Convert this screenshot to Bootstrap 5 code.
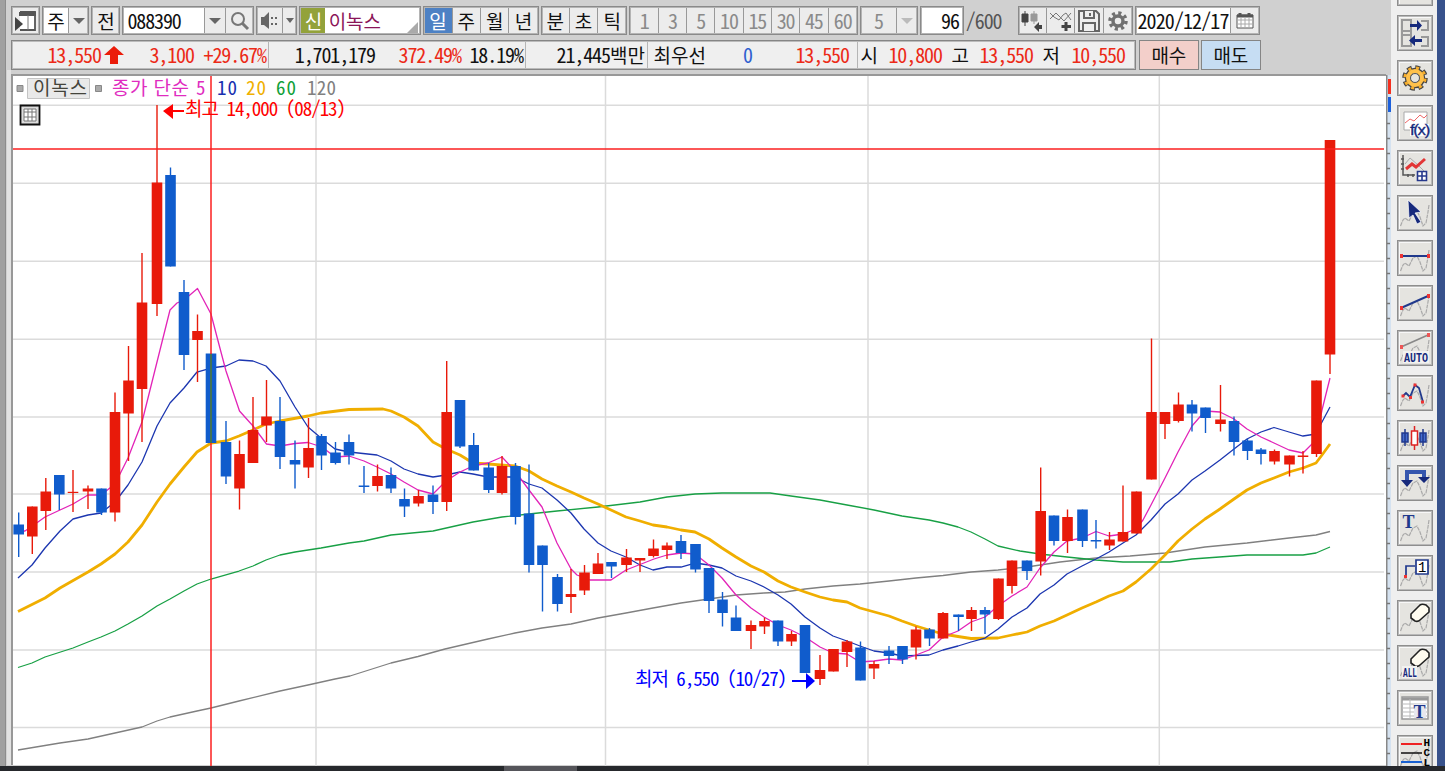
<!DOCTYPE html>
<html lang="ko">
<head>
<meta charset="utf-8">
<title>이녹스 088390</title>
<meta name="viewport" content="width=device-width, initial-scale=1">
<link href="https://cdn.jsdelivr.net/npm/bootstrap@5.3.0/dist/css/bootstrap.min.css" rel="stylesheet">
<style>
  body { height: 771px; background: #d0d0d0; color: #111; font-family: "Noto Sans CJK KR", sans-serif; font-size: 20px; line-height: 26px; letter-spacing: -1.1px; font-feature-settings: "hwid"; white-space: nowrap; }
  svg { display: block; flex: none; }
  .ko { font-size: 19px; letter-spacing: 0; font-feature-settings: normal; }
  .edge-left { width: 7px; background: linear-gradient(90deg, #a0a0a0 5px, #8c8c8c 5px, #8c8c8c 6px, #d0d0d0 6px); }
  .gutter { width: 4px; background: #e2e2e2; }
  .workarea { width: 1379px; }
  .toolbar { height: 40px; padding-top: 6px; }
  .grp { height: 29px; border: 1px solid #8a8a8a; outline: 1px solid #b4b4b4; outline-offset: -2px; background: #ececec; margin-right: 2px; }
  .grp > * { width: 28.3px; height: 27px; display: flex; align-items: center; justify-content: center; flex: none; border-right: 1px solid #999; }
  .grp > :last-child { border-right: 0; }
  .grp .field { background: #fff; }
  .grp.dim { color: #8a8a8a; }
  .grp .sel { background: #4d81c4; color: #fff; }
  .tri { width: 0; height: 0; border: 6px solid transparent; border-top-color: #666; border-bottom: 0; }
  .quote { height: 30px; width: 1125px; border: 1px solid #858585; outline: 1px solid #bbb; outline-offset: -2px; background: #efefef;
    display: grid; grid-template-columns: 89px 23px 70px 75px 106px 86px 65px 122px 58px 46px 97px 9px 20px 64px 27px 64px 27px 65px; justify-items: end; align-items: center; }
  .quote > * { height: 28px; display: flex; align-items: center; }
  .quote .cut { border-right: 1px solid #b5b5b5; padding-right: 2px; }
  .up { color: #ec2a17; }
  .order { height: 30px; border: 1px solid #858585; width: 60px; }
  .buy { background: #f3cfca; margin-left: 3px; }
  .sell { background: #c6ddf3; margin-left: 2px; }
  .pane { border: 2px solid #989898; border-bottom: 0; border-right: 0; background: #fff; margin-top: 4px; height: 691px; width: 1375px; }
  .pane svg { overflow: visible; }
  .rows { padding-left: 4px; }
  .scale { width: 5px; }
  .dock { width: 47px; background: #efefef; overflow: hidden; padding-left: 6px; }
  .tool { width: 36px; height: 36px; border: 1px solid #8e8e8e; outline: 1px solid #b8b8b8; outline-offset: -2px; background: #e5e4e0; box-shadow: inset 2px 2px #f8f8f8; margin-bottom: 9px; flex: none; }
  .tool svg { margin: -1px; }
  .tool:first-child { margin-top: -30.5px; }
  .edge-right { width: 8px; background: #38528c; }
  .taskbar { height: 5px; background: linear-gradient(90deg, #26282c 504px, #55555a 504px, #55555a 577px, #26282c 577px); }
  .cap { font-family: "Liberation Mono", monospace; font-weight: 700; font-feature-settings: normal; letter-spacing: 0; }
</style>
</head>
<body class="d-flex flex-column overflow-hidden">
<svg width="0" height="0" class="position-absolute">
  <defs>
    <path id="wave" d="M3.5 31L6 25L8 23L12 26L16 18L20 16L23 22L26 31L29 28L31 17L32 10" fill="none" stroke="#a9a9a9" stroke-width="1.2" stroke-dasharray="4 .8"/>
    <path id="rubber" d="M14 14L23 5Q25 3.500 29 5L32 8V12L23 20Q21 22 18 21L14 18Z" fill="#fffcf0" stroke="#222" stroke-width="1.6"/>
  </defs>
</svg>
<main class="d-flex" style="height:766px">
  <div class="edge-left"></div>
  <div class="workarea">
    <div class="rows">
      <div class="toolbar d-flex">
        <div class="grp d-flex"><span style="width:27.5px"><svg width="22" height="22" viewBox="0 0 22 22"><path d="M5 2H20V20H5" fill="#fff" stroke="#555" stroke-width="1.8"/><path d="M4 3H21M4 5H21" stroke="#555" stroke-width="2"/><path d="M13 5V20" stroke="#777"/><path d="M0 7L8 14L0 21Z" fill="#444"/></svg></span></div>
        <div class="grp d-flex ko"><span class="field" style="width:26px">주</span><span style="width:19px"><i class="tri"></i></span></div>
        <div class="grp d-flex ko"><span style="width:27px">전</span></div>
        <div class="grp d-flex"><span class="field justify-content-start ps-1" style="width:82px">088390</span><span style="width:21px"><i class="tri"></i></span><span style="width:27px"><svg width="20" height="20" viewBox="0 0 20 20" fill="none" stroke="#777"><circle cx="8" cy="8" r="6" stroke-width="2"/><path d="M12 12L18 18" stroke-width="3"/></svg></span></div>
        <div class="grp d-flex"><span style="width:26px"><svg width="20" height="20" viewBox="0 0 20 20" fill="#666"><path d="M1 6H4L9 1V18L4 14H1ZM11 6h2v2h-2zM11 12h2v2h-2zM15 6h2v2h-2zM15 12h2v2h-2z"/></svg></span><span style="width:13px"><i class="tri" style="border-width:5px 4px 0"></i></span></div>
        <div class="grp d-flex ko field position-relative" style="width:122px;background:#fff"><span class="text-white border-0" style="width:24px;height:25px;margin:1px;background:#93a23a">신</span><span class="border-0" style="width:57px;color:#8b1558">이녹스</span><svg class="position-absolute p-0 border-0" style="right:2px;bottom:1px;width:11px;height:11px" viewBox="0 0 11 11"><path d="M11 0V11H0Z" fill="#aaa"/></svg></div>
        <div class="grp d-flex ko"><span class="sel">일</span><span>주</span><span>월</span><span>년</span></div>
        <div class="grp d-flex ko"><span>분</span><span>초</span><span>틱</span></div>
        <div class="grp d-flex dim"><span>1</span><span>3</span><span>5</span><span>10</span><span>15</span><span>30</span><span>45</span><span>60</span></div>
        <div class="grp d-flex dim"><span style="width:36px">5</span><span style="width:20px"><i class="tri" style="border-top-color:#bbb"></i></span></div>
        <div class="grp d-flex"><span class="field justify-content-end pe-1" style="width:42px">96</span></div>
        <div style="width:52px;padding-top:2px;color:#555">/600</div>
        <div class="grp d-flex"><span><svg width="24" height="24" viewBox="0 0 24 24"><path d="M5 2V17M2 5h6v8h-6z" fill="#444" stroke="#444"/><path d="M14 2V15M11 5h6v7h-6z" fill="#999" stroke="#999"/><path d="M14 18L19 13V16H22V20H19V23Z" fill="#444"/></svg></span><span><svg width="24" height="24" viewBox="0 0 24 24" fill="none" stroke="#777"><path d="M1 10L7 4L15 12L22 4M1 4L5 8L10 11L14 6L17 4L22 11"/><path d="M17 13V22M12.500 17.500H22" stroke="#444" stroke-width="3"/></svg></span><span><svg width="22" height="22" viewBox="0 0 22 22" fill="#eee" stroke="#666" stroke-width="2"><path d="M1 1H18L21 4V21H1Z"/><path d="M6 1V8H16V1M5 21V13H17V21M12 3V6"/></svg></span><span><svg width="20" height="20" viewBox="0 0 20 20"><circle cx="10" cy="10" r="8" fill="none" stroke="#707070" stroke-width="3.500" stroke-dasharray="3.140"/><circle cx="10" cy="10" r="5" fill="none" stroke="#707070" stroke-width="3.500"/></svg></span></div>
        <div class="grp d-flex"><span class="field" style="width:95px;letter-spacing:-.9px">2020/12/17</span><span style="width:28px"><svg width="18" height="18" viewBox="0 0 18 18"><path d="M1 3H17V16H1Z" fill="#fff" stroke="#555"/><path d="M1 4H17M4 1V4M13 1V4" stroke="#555" stroke-width="3"/><path d="M1 8H17M1 12H17M5 5V16M9 5V16M13 5V16" stroke="#aaa"/></svg></span></div>
      </div>
      <div class="d-flex">
        <div class="quote">
          <span class="up">13,550</span><span><svg width="20" height="19" viewBox="0 0 20 19"><path d="M10 0L20 9H14V18H6V9H0Z" fill="#eb1c0a"/></svg></span><span class="up">3,100</span><span class="up cut">+29.67%</span>
          <span>1,701,179</span><span class="up">372.49%</span><span class="cut">18.19%</span>
          <span class="cut">21,445<span class="ko">백만</span></span>
          <span class="ko">최우선</span><span style="color:#2f5fd0">0</span><span class="up">13,550</span><span class="cut"></span>
          <span class="ko">시</span><span class="up">10,800</span><span class="ko">고</span><span class="up">13,550</span><span class="ko">저</span><span class="up">10,550</span>
        </div>
        <div class="order buy ko d-flex align-items-center justify-content-center">매수</div>
        <div class="order sell ko d-flex align-items-center justify-content-center">매도</div>
      </div>
    </div>
    <div class="d-flex"><div class="gutter"></div>
    <div class="pane">
      <svg id="chart" width="1373" height="690" viewBox="13 76 1373 690" font-size="19">
        <path d="M13 105.300H1384M13 183.300H1384M13 261.300H1384M13 339.300H1384M13 417H1384M13 494H1384M13 572H1384M13 650H1384M13 727.500H1384M316 76V766M605.500 76V766M868 76V766M1159.300 76V766" stroke="#dbdbdb" stroke-width="1.500"/>
        <g id="averages" fill="none" stroke-linejoin="round"></g>
        <g id="candles"></g>
        <path d="M13 149H1384M211 76V766" stroke="#fb2020" stroke-width="1.500"/>
        <path d="M211 354V443" stroke="#178a58" stroke-width="1.500"/>
        <g stroke="#888" fill="#aaa"><path d="M17 85.500h6v6h-6zM95.500 85.500h6v6h-6z"/><path d="M27.500 78.500h62v20h-62z" fill="#e9e9e9" stroke="#c4c4c4"/></g>
        <g class="ko"><text x="33" y="95" textLength="54" fill="#44443c">이녹스</text><text x="112" y="95" textLength="77" fill="#e02cc0">종가 단순</text></g>
        <g><text x="196" y="95" fill="#e02cc0">5</text><text x="217" y="95" textLength="19" fill="#1830b0">10</text><text x="246" y="95" textLength="19" fill="#f0b000">20</text><text x="276" y="95" textLength="19" fill="#10a038">60</text><text x="307" y="95" textLength="28" fill="#808080">120</text></g>
        <g fill="#f00"><text x="185" y="116" textLength="160">최고 14,000 (08/13)</text><path d="M163 111L173 104V110H184V112H173V119Z"/></g>
        <g fill="#00f"><text x="635" y="686" textLength="151">최저 6,550 (10/27)</text><path d="M815 681L806 673V680H792V682H806V689Z"/></g>
        <path d="M20.500 105.500h19v19h-19z" fill="#ddd" stroke="#111" stroke-width="1.800"/><path d="M24 109h12v12h-12zM28 109v12M32 109v12M24 112h12M24 117h12" fill="#fff" stroke="#777"/>
      </svg>
    </div></div>
  </div>
  <svg class="scale" id="scale" width="5" height="766"><path d="M0 0H5V75H0Z" fill="#d0d0d0"/><path d="M0 75H5V766H0Z" fill="#d5e2f0"/><path d="M.5 75V766" stroke="#888" stroke-width="2"/><path d="M2 79h3v15h-3z" fill="#f43020"/><path d="M2 97h3v15h-3z" fill="#1c60dc"/></svg>
  <aside class="dock d-flex flex-column" id="dock">
    <div class="tool"></div>
    <div class="tool"><svg width="36" height="36"><path d="M5 5H14V31H5ZM5 16H14M5 20H14M24 6H31V15H24M24 22H31V31H24" fill="none" stroke="#999" stroke-width="2"/><path d="M13 9H20V5L25 10.500L20 16V12H13ZM25 24H18V20L12 25.500L18 31V27H25Z" fill="#16297c"/></svg></div>
    <div class="tool"><svg width="36" height="36"><circle cx="18" cy="18" r="10.500" fill="none" stroke="#444" stroke-width="4.500" stroke-dasharray="4.700 3.547"/><circle cx="18" cy="18" r="7.500" fill="none" stroke="#444" stroke-width="5.500"/><circle cx="18" cy="18" r="10" fill="none" stroke="#f5ad2c" stroke-width="3.200" stroke-dasharray="3 4.854" stroke-dashoffset="-.7"/><circle cx="18" cy="18" r="7" fill="none" stroke="#ffc14b" stroke-width="4"/><circle cx="18" cy="18" r="4.500" fill="#e5e4e0" stroke="#555"/></svg></div>
    <div class="tool"><svg width="36" height="36"><path d="M7 7H30V25H7Z" fill="#fff" stroke="#aaa"/><path d="M8 18L13 14L17 16L23 10L27 13L30 10" fill="none" stroke="#ee6666"/><path d="M13 19h19v12h-19z" fill="#fff"/><text x="13" y="29.500" font-family="Liberation Sans" font-size="14" textLength="19" lengthAdjust="spacingAndGlyphs" fill="#16297c" stroke="#16297c" stroke-width=".3">f(x)</text></svg></div>
    <div class="tool"><svg width="36" height="36"><path d="M6 5V25H18M4 9H7M4 14H7M4 19H7M11 24V27M16 24V27" stroke="#555" stroke-width="1.500" fill="none"/><path d="M8 14L13 8L21 15L28 22" fill="none" stroke="#aaa"/><path d="M9 19L15 14L19 17L28 9" fill="none" stroke="#e23535" stroke-width="3"/><path d="M20.500 21.500h9v9h-9zM25 21v10M20 26h10" fill="#fff" stroke="#26388c" stroke-width="1.600"/></svg></div>
    <div class="tool"><svg width="36" height="36"><use href="#wave"/><path d="M11 5L24 17L18 18L24 27L20 29L16 20L12 23Z" fill="#16297c" stroke="#fff" stroke-width=".7"/></svg></div>
    <div class="tool"><svg width="36" height="36"><use href="#wave"/><path d="M4 16H31" stroke="#20398c" stroke-width="2"/><path d="M3 14h3v4H3zM30 14h3v4h-3z" fill="#e33"/></svg></div>
    <div class="tool"><svg width="36" height="36"><use href="#wave"/><path d="M4 23L31 11" stroke="#20398c" stroke-width="2"/><path d="M3 21h3v4H3zM30 9h3v4h-3z" fill="#e33"/></svg></div>
    <div class="tool"><svg width="36" height="36"><use href="#wave"/><path d="M4 17L31 5" stroke="#888" stroke-width="1.500"/><path d="M3 15h3v4H3zM30 3h3v4h-3z" fill="#e55"/><path d="M6 21h26v12H6z" fill="#f2f2f0"/><text class="cap" x="7" y="31.500" font-size="13" textLength="24" lengthAdjust="spacingAndGlyphs" fill="#16297c">AUTO</text></svg></div>
    <div class="tool"><svg width="36" height="36"><use href="#wave"/><path d="M6 21L9 18L13 22L18 10L22 13L26 27" fill="none" stroke="#20398c" stroke-width="1.800"/><path d="M4.500 19.500h3v3h-3zM12 21h3v3h-3zM16.500 8.500h3v3h-3zM24 25.500h3v3h-3z" fill="#e33"/></svg></div>
    <div class="tool"><svg width="36" height="36"><use href="#wave"/><path d="M8 9V26M26 9V26M5 13h6v9H5zM23 13h6v9h-6z" fill="#466ed0" stroke="#20398c" stroke-width="1.500"/><path d="M17.500 6V30" stroke="#d22" stroke-width="1.500"/><path d="M14.500 11h6v14h-6z" fill="#fff" stroke="#d22" stroke-width="1.500"/></svg></div>
    <div class="tool"><svg width="36" height="36"><use href="#wave"/><path d="M10 18V7H27V14" fill="none" stroke="#3556ae" stroke-width="4"/><path d="M4 15H16L10 22ZM21 12H33L27 18Z" fill="#16297c"/></svg></div>
    <div class="tool"><svg width="36" height="36"><use href="#wave"/><text x="5.500" y="18" font-family="Liberation Serif" font-weight="700" font-size="18" fill="#20398c">T</text></svg></div>
    <div class="tool"><svg width="36" height="36"><use href="#wave"/><path d="M9 22V11H18" fill="none" stroke="#20398c" stroke-width="1.700"/><path d="M19 5h12v14H19z" fill="#fff" stroke="#20398c" stroke-width="1.700"/><text class="cap" x="21" y="17" font-size="14" style="font-weight:400">1</text><path d="M7 20h3v3H7z" fill="#e33"/></svg></div>
    <div class="tool"><svg width="36" height="36"><use href="#wave"/><use href="#rubber"/></svg></div>
    <div class="tool"><svg width="36" height="36"><use href="#wave"/><use href="#rubber"/><path d="M5 21h15v12H5z" fill="#f2f2f0"/><text class="cap" x="6" y="31.500" font-size="13" textLength="14" lengthAdjust="spacingAndGlyphs" fill="#16297c">ALL</text></svg></div>
    <div class="tool"><svg width="36" height="36"><path d="M5 7H31V29H5Z" fill="#fff" stroke="#999" stroke-width="1.500"/><path d="M5 9H31" stroke="#999" stroke-width="3"/><path d="M5 14H31M5 18H31M5 22H31M5 26H31M13 9V29" stroke="#bbb"/><path d="M17 14h12v14H17z" fill="#e8e8ee"/><text x="16.500" y="27.500" font-family="Liberation Serif" font-weight="700" font-size="18" fill="#20398c">T</text></svg></div>
    <div class="tool"><svg width="36" height="36"><use href="#wave"/><path d="M4 9H25" stroke="#e22" stroke-width="2"/><path d="M4 18H25" stroke="#111" stroke-width="1.500"/><path d="M4 27H25" stroke="#1860d0" stroke-width="2"/><g class="cap" font-size="11"><text x="26.500" y="11">H</text><text x="26.500" y="21">C</text><text x="26.500" y="31">L</text></g></svg></div>
  </aside>
  <div class="edge-right"></div>
</main>
<footer class="taskbar"></footer>
<script>
  // Each bar: colour, centre x, high, body top, body bottom, low
  const bars = `B 18.7 512.5 524.5 534.5 557|R 32.3 506.5 506.5 536.5 554|R 45.8 478 491.5 511 530|B 59.3 475 475 494.5 510|R 73 470 491.8 493 512|R 88 485.5 488.5 491.5 509|B 101.5 488.5 488.5 512.5 515|R 115 392.5 412 512.5 521.5|R 128.5 346 380.5 413.5 461|R 142 253 302.5 389 442|R 157 105 182.5 304 316|B 170.5 167.5 175 266.5 266.5|B 184 280 292 355 370|R 197.5 314.5 331 340 382|B 211 353.5 353.5 443 443|B 226 421 442 476.5 484|R 239.5 440.5 454 488.5 509.5|R 253 397 430 463 463|R 266.5 380 416.5 425.5 442|B 280 397 421 457 469|B 295 440.5 460 464.5 488.5|R 308.5 418 448 467.5 478|B 321.5 434 436 455.5 470|B 335.5 442 452.5 463 464.5|B 349 434.5 442 455.5 464.5|B 364 466 485.5 487 493|R 377.5 464.5 476 486 491.5|B 391 467.5 475 488.5 493|B 404.5 488.5 499 506.5 517|R 418.5 490 496 503.5 506.5|B 433 485.5 494.5 502 514|R 446.7 361 412 502 511|B 460 400 400 446.5 448|B 473.7 433 445 470.5 470.5|B 488.7 463 467.5 490 493|R 502 456 466 493 494.5|B 515.5 463 466 517 524.5|B 529 464.5 513.5 565 572.5|B 542.5 545.5 545.5 565 611.5|B 557.5 574 577 604 611.5|R 571 569 594 597 613|R 584.5 565 572.5 590.5 595|R 598 553 563.5 574 574|B 611.5 562 562 566.5 578|R 626.5 549 557.5 565 572|R 640 558 558 560.5 572|R 653.5 539.5 548.5 556 557.5|R 667 542.5 545.5 550 559|B 681 535 541 553 559|B 695.5 544 544 569.5 572.5|B 709 568 568 601 613|B 722.5 592 599.5 613 626.5|B 736 605.5 617.5 631 631|R 751 620.5 625 631 649|R 764.5 617.5 621 626.5 634|B 778 620.5 620.5 641.5 646|R 791.5 631 634 641.5 646|B 805 625 625 673 673|R 820 655 670 679 685|R 833.5 649 649 671.5 671.5|R 847 640 641.5 652 667|B 860.5 641.5 647.5 680.5 680.5|R 874 661 664 668.5 679|B 889 646 650.5 656 664|B 902.5 646 646 659.5 664|R 916 626.5 629.5 647.5 659.5|B 929.5 628 629.5 638.5 646|R 943 612 613 638.5 638.5|B 958.5 614.5 614.5 617 631|R 971.5 607 610 619 631|B 985 607 610 614.5 634|R 998.5 578.5 578.5 619 620|R 1012 560.5 560.5 586 593.5|B 1027 560.5 560.5 571 580|R 1040.7 467.5 511 561.5 575.5|B 1054 515.5 515.5 541 545.5|R 1067.5 509.5 517 541 553|B 1082.5 509.5 509.5 541 547|B 1096 520 540 541.5 548.5|R 1109.5 532 539.5 545.5 550|R 1123 485.5 532 541.5 541.5|R 1136.5 491.5 491.5 533.5 533.5|R 1151.5 338.5 412 479.5 479.5|R 1165 412 412 424 439|R 1178.5 392.5 404.5 421 422.5|B 1192 400 404.5 413.5 431.5|B 1205.5 407.5 407.5 418 433|R 1220.5 385 419.5 424 431.5|B 1234 416.5 421 442 455.5|B 1247.5 439 440.5 451 460|B 1261 448 449.5 454 464.5|R 1274.5 449.5 451 461.5 464.5|R 1289.5 455.5 455.5 464.5 476.5|R 1303 451 455.5 457 473.5|R 1316.5 380.5 380.5 454 457|R 1330 140 140 354.5 374`;
  document.getElementById('candles').innerHTML = bars.split('|').map(r => {
    const [c, x, h, t, b, l] = r.split(' ');
    const f = c === 'R' ? '#e81a0a' : '#105ccc';
    return `<path d="M${x} ${h}V${l}" stroke="${f}" stroke-width="1.4"/><rect x="${x - 5.3}" y="${t}" width="10.6" height="${b - t}" fill="${f}"/>`;
  }).join('');

  const lines = [
    ['#808080', 1.3, '18,750 45,745.5 60,743 88,739 115,733 142,727 157,721 170,717 197,711 211,708 239,701 280,691 308,685 335,679 350,676 391,663 418,656.5 445,649 488,639 515,633 542,628 571,624 598,618 626,613 653,608 681,603 709,599 736,595 764,593 785,592 805,589 833,586 860,584 889,581 916,578 943,575.5 971,572 998,570 1027,567 1060,562 1096,558 1130,556 1165,553 1205,547 1247,543 1289,538 1316,535 1330,531.5'],
    ['#18a045', 1.3, '18,667.5 32,663 45,657 73,648 88,642 101,637 115,631 128,624 142,616 157,606 170,599 184,591 197,584 211,579 239,571 253,566 266,560 280,555 295,552 321,548 349,543 364,541 391,535 433,531 473,522 502,517 529,514 557,511 598,507 640,502 667,497 695,494 722,493 770,493 791,496 820,500 847,505 874,510 902,516 929,520 943,523 958,527 971,532 985,539 998,546 1020,551 1040,554 1067,557 1096,560 1123,562 1170,562 1192,559 1247,555 1303,555 1316,553 1330,547'],
    ['#f0ae00', 2.8, '18,611.5 45,598 60,588 88,572 101,564 115,554 128,542 142,525 157,502 170,484 184,467 197,452 211,443 226,441 239,436 253,430 266,424 280,421 308,416 321,413 349,409.5 383,409 391,411 404,417 418,426 433,442 446,449 460,455 473,463 488,464 515,466 529,471 542,479 557,486 571,492 584,498 598,504 611,510 626,517 640,521 653,525 667,527 681,530 695,532 709,539 722,548 736,557 751,566 764,572 778,581 791,587 805,592 820,597 833,600 847,602 860,608 889,616 902,621 916,626 929,630 943,634 958,636.5 971,638.5 998,638 1012,635 1027,632 1040,626 1054,621 1067,615 1082,608 1096,602 1109,596 1123,591 1136,582 1151,569 1165,555 1178,541 1192,529 1205,519 1220,509 1234,499 1247,490 1261,483 1274,478 1289,472 1303,468 1316,463 1322,455 1330,444'],
    ['#1c36b0', 1.3, '18,578 32,565 45,548 60,531 73,519 88,515 101,513 115,502 128,485 142,462 157,426 170,403 184,388 197,372 211,368 226,366 239,360 253,361 266,366 280,381 295,407 308,427 321,438 335,449 349,452 377,455 391,461 404,469 418,474 433,477 446,475 460,472 473,474 488,477 515,477 529,484 542,488 557,500 571,513 584,529 598,543 611,551 626,557 640,565 653,570 667,567 681,567 695,563 709,565 722,568 736,576 751,581 764,587 778,595 791,604 805,617 820,628 833,636 847,641 860,646 874,651 889,653 902,656 929,655 943,650 958,646 971,642 985,638 998,629 1012,617 1027,608 1040,594 1054,585 1067,574 1082,566 1096,559 1109,552 1123,543 1136,535 1151,520 1165,504 1178,494 1192,480 1205,471 1220,460 1234,449 1247,439 1261,432 1274,427.5 1289,432 1303,436 1316,434 1322,422 1330,407'],
    ['#e224b8', 1.3, '18,531 25,531 38,522 45,517 60,510 73,504 88,495 101,495 115,484 128,458 142,422 150,390 160,350 170,310 177,303 184,300 197.5,288.5 211,314 217,337 226,371 239.5,411 253,426 266.5,444 280,446 295,443.5 308,442.5 322,447 335,457 349,456 364,461 377,467 391,474 404,482 418,490 433,494 446,481 460,472 473,466 488,463 502,457 515,471 529,490 542,507 557,543 571,569 577,575 590,580 611,580 626,570 640,564.5 654,559 667,555 681,553 695,554 709,565 722,578 736,595 751,608 764,617 778,625 791,630 805,637 820,647 833,653 847,654 860,662 874,661 889,659 902,660 916,655 929,650 943,637 958,631 971,622 985,617 998,606 1012,596 1027,587 1040,568 1054,552 1067,541 1082,538 1096,531.5 1109,536 1123,534 1136,529 1143,520 1151,505 1165,478 1178,452 1192,426 1205,411 1220,412 1234,419 1247,429 1261,437 1274,443 1289,450 1303,453 1316,440 1322,410 1330,378']
  ];
  document.getElementById('averages').innerHTML = lines.map(([c, w, p]) => `<polyline points="${p}" stroke="${c}" stroke-width="${w}"/>`).join('');

  let ticks = '';
  for (let y = 123; y < 766; y += 15) ticks += `M1 ${y}.5H4`;
  document.getElementById('scale').insertAdjacentHTML('beforeend', `<path d="${ticks}" stroke="#777" stroke-width="1.4"/>`);
</script>
</body>
</html>
